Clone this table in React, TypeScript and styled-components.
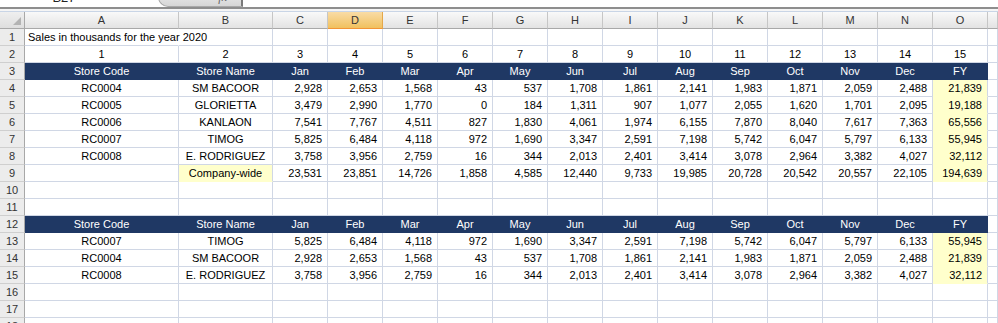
import React from 'react';
import styled, { createGlobalStyle, css } from 'styled-components';

const GlobalStyle = createGlobalStyle`
    html, body {
        margin: 0;
        padding: 0;
        background: #ffffff;
        overflow: hidden;
        font-family: "Liberation Sans", Arial, sans-serif;
    }
`;

const GRID = '#d0d7e5';
const NAVY = '#1f3864';
const YELLOW = '#ffffcc';

const Window = styled.div`
    width: 998px;
    height: 323px;
    overflow: hidden;
    background: #fff;
`;

/* formula bar, cut off at the top of the screenshot */
const FormulaBar = styled.div`
    height: 7px;
    overflow: hidden;
    border-bottom: 2px solid #8e8e8e;
    position: relative;
`;

const FormulaInner = styled.div`
    display: flex;
    align-items: center;
    height: 22px;
    margin-top: -14px;
`;

const NameBox = styled.div`
    width: 128px;
    text-align: center;
    font-size: 13px;
    color: #222;
`;

const NameArrow = styled.div`
    width: 30px;
    text-align: left;
    font-size: 9px;
    color: #333;
`;

const FxCapsule = styled.div`
    width: 85px;
    height: 20px;
    box-sizing: border-box;
    border: 1px solid #a9a9a9;
    border-right: 2px solid #7a7a7a;
    border-radius: 10px 0 0 10px;
    background: linear-gradient(#f2f2f2, #d6d6d6);
    display: flex;
    align-items: center;
    justify-content: flex-end;
    padding-right: 14px;
    font-style: italic;
    font-size: 12px;
    color: #666;
    font-family: "Liberation Serif", serif;
`;

const Spacer = styled.div`
    height: 2px;
    background: #f5f5f5;
    border-bottom: 1px solid #c9d5e6;
`;

const Sheet = styled.div`
    display: grid;
    grid-template-columns: 25px 154px 94px repeat(13, 55px) 1fr;
    grid-auto-rows: 17px;
    font-size: 11px;
`;

const ColHead = styled.div<{ $active?: boolean }>`
    box-sizing: border-box;
    display: flex;
    align-items: center;
    justify-content: center;
    color: #333;
    background: linear-gradient(#f9f9f9, #e3e3e3);
    border-right: 1px solid #c6c6c6;
    border-bottom: 1px solid #a8a8a8;
    ${p => p.$active && css`
        background: linear-gradient(#f9dca6, #f1c15f);
        border-bottom: 1px solid #f29536;
        border-right-color: #e5a84a;
    `}
`;

const Corner = styled.div`
    box-sizing: border-box;
    position: relative;
    background: linear-gradient(#efefef, #dedede);
    border-right: 1px solid #a8a8a8;
    border-bottom: 1px solid #a8a8a8;
    &::after {
        content: '';
        position: absolute;
        right: 3px;
        bottom: 3px;
        width: 0;
        height: 0;
        border-left: 8px solid transparent;
        border-bottom: 8px solid #b3b3b3;
    }
`;

const RowHead = styled.div`
    box-sizing: border-box;
    display: flex;
    align-items: center;
    justify-content: center;
    color: #333;
    font-size: 11px;
    background: #ececec;
    border-right: 1px solid #a8a8a8;
    border-bottom: 1px solid #cfcfcf;
`;

type Variant = 'plain' | 'navy' | 'yellow';

const Cell = styled.div<{ $align?: 'left' | 'center' | 'right'; $variant?: Variant }>`
    box-sizing: border-box;
    display: flex;
    align-items: center;
    justify-content: ${p => p.$align === 'right' ? 'flex-end' : p.$align === 'center' ? 'center' : 'flex-start'};
    padding: 0 3px 0 3px;
    padding-right: ${p => p.$align === 'right' ? '5px' : '3px'};
    white-space: nowrap;
    color: #000;
    border-right: 1px solid ${GRID};
    border-bottom: 1px solid ${GRID};
    ${p => p.$variant === 'navy' && css`
        background: ${NAVY};
        color: #fff;
        border-color: ${NAVY};
    `}
    ${p => p.$variant === 'yellow' && css`
        background: ${YELLOW};
        border-bottom-color: ${YELLOW};
    `}
`;

const Title = styled(Cell)`
    overflow: visible;
    border-right-color: transparent;
`;

const columns = ['A', 'B', 'C', 'D', 'E', 'F', 'G', 'H', 'I', 'J', 'K', 'L', 'M', 'N', 'O', ''];
const months = ['Jan', 'Feb', 'Mar', 'Apr', 'May', 'Jun', 'Jul', 'Aug', 'Sep', 'Oct', 'Nov', 'Dec', 'FY'];

type Store = { code: string; name: string; values: string[] };

const stores: Record<string, Store> = {
    RC0004: { code: 'RC0004', name: 'SM BACOOR', values: ['2,928', '2,653', '1,568', '43', '537', '1,708', '1,861', '2,141', '1,983', '1,871', '2,059', '2,488', '21,839'] },
    RC0005: { code: 'RC0005', name: 'GLORIETTA', values: ['3,479', '2,990', '1,770', '0', '184', '1,311', '907', '1,077', '2,055', '1,620', '1,701', '2,095', '19,188'] },
    RC0006: { code: 'RC0006', name: 'KANLAON', values: ['7,541', '7,767', '4,511', '827', '1,830', '4,061', '1,974', '6,155', '7,870', '8,040', '7,617', '7,363', '65,556'] },
    RC0007: { code: 'RC0007', name: 'TIMOG', values: ['5,825', '6,484', '4,118', '972', '1,690', '3,347', '2,591', '7,198', '5,742', '6,047', '5,797', '6,133', '55,945'] },
    RC0008: { code: 'RC0008', name: 'E. RODRIGUEZ', values: ['3,758', '3,956', '2,759', '16', '344', '2,013', '2,401', '3,414', '3,078', '2,964', '3,382', '4,027', '32,112'] },
};

const totals = ['23,531', '23,851', '14,726', '1,858', '4,585', '12,440', '9,733', '19,985', '20,728', '20,542', '20,557', '22,105', '194,639'];

const EmptyRow: React.FC<{ n: number }> = ({ n }) => (
    <>
        <RowHead>{n}</RowHead>
        {columns.map((c, i) => <Cell key={i} />)}
    </>
);

const HeaderRow: React.FC<{ n: number }> = ({ n }) => (
    <>
        <RowHead>{n}</RowHead>
        <Cell $align="center" $variant="navy">Store Code</Cell>
        <Cell $align="center" $variant="navy">Store Name</Cell>
        {months.map(m => <Cell key={m} $align="center" $variant="navy">{m}</Cell>)}
        <Cell />
    </>
);

const StoreRow: React.FC<{ n: number; store: Store }> = ({ n, store }) => (
    <>
        <RowHead>{n}</RowHead>
        <Cell $align="center">{store.code}</Cell>
        <Cell $align="center">{store.name}</Cell>
        {store.values.map((v, i) => (
            <Cell key={i} $align="right" $variant={i === 12 ? 'yellow' : 'plain'}>{v}</Cell>
        ))}
        <Cell />
    </>
);

export default function App() {
    return (
        <Window>
            <GlobalStyle />
            <FormulaBar>
                <FormulaInner>
                    <NameBox>B27</NameBox>
                    <NameArrow>▾</NameArrow>
                    <FxCapsule>fx</FxCapsule>
                </FormulaInner>
            </FormulaBar>
            <Spacer />
            <Sheet>
                <Corner />
                {columns.map((c, i) => <ColHead key={i} $active={c === 'D'}>{c}</ColHead>)}

                <RowHead>1</RowHead>
                <Title>Sales in thousands for the year 2020</Title>
                <Cell />
                {columns.slice(2).map((c, i) => <Cell key={i} />)}

                <RowHead>2</RowHead>
                {columns.slice(0, 15).map((c, i) => <Cell key={i} $align="center">{i + 1}</Cell>)}
                <Cell />

                <HeaderRow n={3} />
                <StoreRow n={4} store={stores.RC0004} />
                <StoreRow n={5} store={stores.RC0005} />
                <StoreRow n={6} store={stores.RC0006} />
                <StoreRow n={7} store={stores.RC0007} />
                <StoreRow n={8} store={stores.RC0008} />

                <RowHead>9</RowHead>
                <Cell />
                <Cell $align="center" $variant="yellow">Company-wide</Cell>
                {totals.map((v, i) => (
                    <Cell key={i} $align="right" $variant={i === 12 ? 'yellow' : 'plain'}>{v}</Cell>
                ))}
                <Cell />

                <EmptyRow n={10} />
                <EmptyRow n={11} />
                <HeaderRow n={12} />
                <StoreRow n={13} store={stores.RC0007} />
                <StoreRow n={14} store={stores.RC0004} />
                <StoreRow n={15} store={stores.RC0008} />
                <EmptyRow n={16} />
                <EmptyRow n={17} />
                <EmptyRow n={18} />
            </Sheet>
        </Window>
    );
}
